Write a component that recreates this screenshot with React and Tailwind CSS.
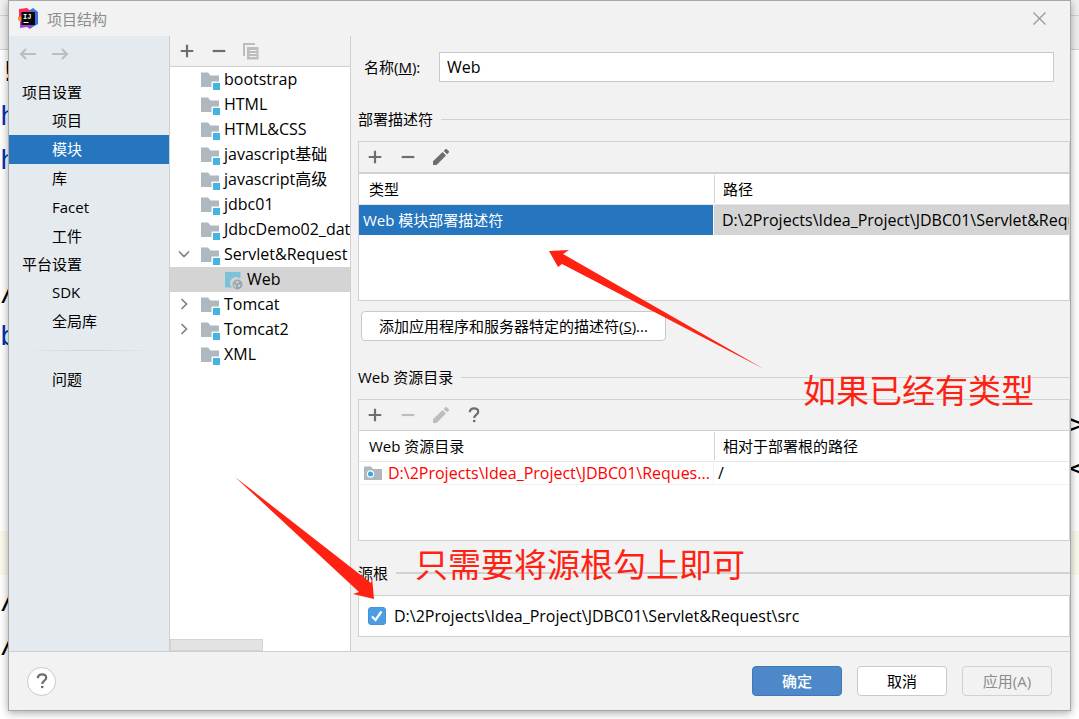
import React, { useState } from 'react';

const SETTINGS_GROUPS = [
  { title: '项目设置', items: ['项目', '模块', '库', 'Facet', '工件'] },
  { title: '平台设置', items: ['SDK', '全局库'] },
];

const MODULES = [
  { name: 'bootstrap' },
  { name: 'HTML' },
  { name: 'HTML&CSS' },
  { name: 'javascript基础' },
  { name: 'javascript高级' },
  { name: 'jdbc01' },
  { name: 'JdbcDemo02_dat' },
  { name: 'Servlet&Request', open: true, children: ['Web'] },
  { name: 'Tomcat', open: false },
  { name: 'Tomcat2', open: false },
  { name: 'XML' },
];

// one entry per 44px editor line
const EDITOR_LINES = [
  { text: '!' },
  { text: 'h', tag: true },
  { text: 'h', tag: true },
  {},
  {},
  { text: '/' },
  { text: 'b', tag: true },
  {},
  { end: '>' },
  { end: '<' },
  {},
  { current: true },
  { text: '/' },
  { text: '/' },
];

const PlusIcon = () => (
  <svg width="14" height="14" viewBox="0 0 14 14" fill="none" stroke="currentColor" strokeWidth="2.2">
    <path d="M7 .7v12.600M.7 7h12.600" />
  </svg>
);

const MinusIcon = () => (
  <svg width="14" height="14" viewBox="0 0 14 14" fill="none" stroke="currentColor" strokeWidth="2.2">
    <path d="M.7 7h12.600" />
  </svg>
);

const PencilIcon = () => (
  <svg width="18" height="18" viewBox="0 0 18 18" fill="currentColor">
    <path d="M1 13.2 10.6 4l3.4 3.4L4.6 17H1zM11.7 2.9l1.6-1.6c.5-.5 1.1-.5 1.6 0l1.8 1.8c.5.5.5 1.1 0 1.6l-1.6 1.6z" />
  </svg>
);

const HelpIcon = () => (
  <svg width="12" height="16" viewBox="0 0 12 16" fill="none" stroke="currentColor" strokeWidth="2.2">
    <path d="M1.8 5.2C1.8 2.8 3.6 1.4 6 1.4s4.2 1.4 4.2 3.5C10.2 7.4 6.2 7.8 6.2 11" />
    <path d="M5 14h2.4" />
  </svg>
);

const CopyIcon = () => (
  <svg width="16" height="17" viewBox="0 0 16 17" fill="none" stroke="currentColor" strokeWidth="2">
    <path d="M1 13V1h11" />
    <path d="M4 4h11.500v12.500H4z" fill="currentColor" stroke="none" />
    <path d="M6.500 7.500h7M6.500 10.500h7M6.500 13.500h7" stroke="#f2f2f2" strokeWidth="1" />
  </svg>
);

const ArrowIcon = ({ flip }) => (
  <svg width="17" height="12" viewBox="0 0 17 12" fill="none" stroke="#bcbdbe" strokeWidth="2">
    <path d={flip ? 'M0 6h15M10 1l5 5-5 5' : 'M17 6H2M7 1 2 6l5 5'} />
  </svg>
);

const Chevron = ({ open }) => (
  <svg width="12" height="12" viewBox="0 0 12 12" fill="none" stroke="#7f8489" strokeWidth="1.7">
    <path d={open ? 'M1 3.500 6 8.500l5-5' : 'M3.500 1 8.500 6l-5 5'} />
  </svg>
);

const FolderIcon = () => (
  <svg width="20" height="18" viewBox="0 0 20 18">
    <path d="M0 .5h7l2.500 3H18v6h-7.500V15H0z" fill="#aeb8be" />
    <path d="M12 11h7v7h-7z" fill="#43b5e0" />
  </svg>
);

const WebIcon = () => (
  <svg width="18" height="18" viewBox="0 0 18 18">
    <path d="M0 0h15.500v6.700A6 6 0 0 0 7 15.500H0z" fill="#7cc3da" />
    <circle cx="12.500" cy="12.500" r="5" fill="#9aa7b0" />
    <path d="m8.700 11.500 2.300 2v2.200l-1-.5-1.500-2.500zM12 9l2 .2-.5 1.500-2 .8-1-.8zM13 12.500l2.500.3-.8 2-1.400.4z" fill="#d4d4d4" />
  </svg>
);

const ResourceFolderIcon = () => (
  <svg width="18" height="14" viewBox="0 0 18 14">
    <path d="M0 .5h7l2 2.500h9v11H0z" fill="#aeb8be" />
    <circle cx="6.500" cy="8" r="3.700" fill="#fff" />
    <circle cx="6.500" cy="8" r="2.500" fill="#35a9dc" />
  </svg>
);

const Logo = () => (
  <svg width="21" height="21" viewBox="0 0 21 21">
    <path d="m1 1 8-1 5 4-3 9-10-4z" fill="#fb2d62" />
    <path d="m0 9 5-1v7l-5-3z" fill="#fc8d1f" />
    <path d="m12 2 3-2 5 4v12l-7 4-4-4z" fill="#3b6fe8" />
    <path d="m2 13 10 2 2 4-2 2-3-2-7 1z" fill="#a63fd0" />
    <path d="M3.500 4h13.500v13H3.500z" fill="#050505" />
    <text x="5" y="11" fontSize="7" fontWeight="700" fill="#fff" fontFamily="Liberation Mono, monospace">IJ</text>
    <path d="M5.500 14.500h5" stroke="#fff" />
  </svg>
);

const ToolButton = ({ label, disabled, children }) => (
  <button
    type="button"
    aria-label={label}
    disabled={disabled}
    className="flex h-6 w-6 items-center justify-center text-[#6e6e6e] disabled:text-[#bdbdbd]"
  >
    {children}
  </button>
);

const SectionTitle = ({ thick, children }) => (
  <div className="flex h-6 items-center gap-2">
    <h2>{children}</h2>
    <div className={thick ? 'h-[2px] flex-1 bg-[#d1d1d1]' : 'h-px flex-1 bg-[#d1d1d1]'} />
  </div>
);

const HeaderCell = ({ divided, children }) => (
  <th className="h-[31px] border-b border-[#e6e6e6] p-0 text-left font-normal">
    <div className={divided ? 'border-l border-[#d1d1d1] pl-2 leading-7' : 'pl-[10px] leading-7'}>{children}</div>
  </th>
);

const Backdrop = () => (
  <div aria-hidden="true" className="absolute inset-0 overflow-hidden bg-white font-['DejaVu_Sans_Mono',monospace] text-[27px]">
    <div className="h-4 border-b border-[#d1d1d1] bg-[#f0f0f0]" />
    <div className="h-[34px] border-b border-[#d1d1d1] bg-[#f0f0f0]" />
    <div className="-mt-[3px]">
      {EDITOR_LINES.map((line, i) => (
        <div
          key={i}
          className={line.current ? 'flex h-11 justify-between bg-[#fcfaed] pt-[3px]' : 'flex h-11 justify-between pt-[3px]'}
        >
          <span className={line.tag ? 'leading-11 text-[#0033b3]' : 'leading-11 text-black'}>{line.text}</span>
          <span className="w-[10px] leading-11 text-black">{line.end}</span>
        </div>
      ))}
    </div>
  </div>
);

const Sidebar = ({ current, onSelect }) => (
  <nav className="w-[161px] shrink-0 border-r border-[#cfcfcf] bg-[#e5eaee]">
    <div className="flex h-9 items-center gap-4 px-[10px]">
      <button type="button" aria-label="后退"><ArrowIcon /></button>
      <button type="button" aria-label="前进"><ArrowIcon flip /></button>
    </div>
    <div className="pt-[7px]">
      {SETTINGS_GROUPS.map((group) => (
        <div key={group.title}>
          <h2 className="pl-[13px] leading-[27px]">{group.title}</h2>
          {group.items.map((item) => (
            <button
              key={item}
              type="button"
              onClick={() => onSelect(item)}
              className={
                item === current
                  ? 'block w-full bg-[#2675bf] pl-[43px] text-left leading-[29px] text-white'
                  : 'block w-full pl-[43px] text-left leading-[29px]'
              }
            >
              {item}
            </button>
          ))}
        </div>
      ))}
    </div>
    <div className="mx-3 my-[14px] h-px bg-linear-to-r from-transparent via-[#cfd3d6] to-transparent" />
    <button type="button" className="block w-full pl-[43px] text-left leading-[29px]">问题</button>
  </nav>
);

const ModuleTree = () => (
  <section className="flex w-[181px] shrink-0 flex-col border-r border-[#cfcfcf] bg-white">
    <div className="flex h-[31px] items-center gap-2 border-b border-[#d1d1d1] bg-[#f2f2f2] px-[5px]">
      <ToolButton label="添加"><PlusIcon /></ToolButton>
      <ToolButton label="移除"><MinusIcon /></ToolButton>
      <ToolButton label="复制" disabled><CopyIcon /></ToolButton>
    </div>
    <ul className="flex-1 overflow-hidden text-base leading-5 whitespace-nowrap">
      {MODULES.map((module) => (
        <li key={module.name}>
          <div className="flex h-[25px] items-center pb-[2px] pl-2">
            <span className="w-[23px] shrink-0">{module.open !== undefined && <Chevron open={module.open} />}</span>
            <span className="w-[23px] shrink-0 pt-[5px]"><FolderIcon /></span>
            <span>{module.name}</span>
          </div>
          {module.children?.map((child) => (
            <div key={child} className="flex h-[25px] items-center gap-1 bg-[#d4d4d4] pb-[2px] pl-[55px]">
              <span className="pt-[5px]"><WebIcon /></span>
              <span>{child}</span>
            </div>
          ))}
        </li>
      ))}
    </ul>
    <div className="h-3 w-[93px] border border-[#d4d4d4] bg-[#e3e3e3]" />
  </section>
);

const WebFacetEditor = () => (
  <main className="min-w-0 flex-1 pb-[14px]">
    <div className="flex items-center pt-4 pr-4 pl-[13px]">
      <label htmlFor="facet-name" className="w-[75px] shrink-0">
        名称(<u>M</u>):
      </label>
      <input
        id="facet-name"
        type="text"
        defaultValue="Web"
        className="h-[30px] min-w-0 flex-1 border border-[#c9c9c9] bg-white px-[7px] text-base outline-none"
      />
    </div>

    <div className="pt-[25px] pl-[7px]">
      <SectionTitle>部署描述符</SectionTitle>
      <div className="mt-[10px] min-h-[160px] border border-[#d1d1d1] bg-white">
        <div className="flex h-8 items-center gap-[9px] border-b-2 border-[#d1d1d1] bg-[#f2f2f2] pl-1">
          <ToolButton label="添加描述符"><PlusIcon /></ToolButton>
          <ToolButton label="移除描述符"><MinusIcon /></ToolButton>
          <ToolButton label="编辑描述符"><PencilIcon /></ToolButton>
        </div>
        <table className="w-full table-fixed border-separate border-spacing-0">
          <thead>
            <tr>
              <HeaderCell>类型</HeaderCell>
              <HeaderCell divided>路径</HeaderCell>
            </tr>
          </thead>
          <tbody>
            <tr className="h-[30px]">
              <td className="border-r border-white bg-[#2675bf] px-1 py-0 text-white">Web 模块部署描述符</td>
              <td className="overflow-hidden bg-[#d4d4d4] py-0 pl-2 text-base leading-5 whitespace-nowrap">
                D:\2Projects\Idea_Project\JDBC01\Servlet&amp;Requ
              </td>
            </tr>
          </tbody>
        </table>
      </div>
      <button type="button" className="mt-[10px] ml-[3px] h-[30px] rounded border border-[#c9c9c9] bg-white px-[17px]">
        添加应用程序和服务器特定的描述符(<u>S</u>)...
      </button>
    </div>

    <div className="pt-6 pl-[7px]">
      <SectionTitle>Web 资源目录</SectionTitle>
      <div className="mt-[10px] min-h-[142px] border border-[#d1d1d1] bg-white">
        <div className="flex h-[31px] items-center gap-[9px] border-b border-[#d1d1d1] bg-[#f2f2f2] pl-1">
          <ToolButton label="添加目录"><PlusIcon /></ToolButton>
          <ToolButton label="移除目录" disabled><MinusIcon /></ToolButton>
          <ToolButton label="编辑目录" disabled><PencilIcon /></ToolButton>
          <ToolButton label="帮助"><HelpIcon /></ToolButton>
        </div>
        <table className="w-full table-fixed border-separate border-spacing-0">
          <thead>
            <tr>
              <HeaderCell>Web 资源目录</HeaderCell>
              <HeaderCell divided>相对于部署根的路径</HeaderCell>
            </tr>
          </thead>
          <tbody>
            <tr>
              <td className="border-r border-b border-[#f2f2f2] py-0 pr-0 pl-[5px] text-[#f00]">
                <div className="flex items-center gap-[6px] text-base leading-[22px]">
                  <span className="shrink-0"><ResourceFolderIcon /></span>
                  <span className="truncate">D:\2Projects\Idea_Project\JDBC01\Reques...</span>
                </div>
              </td>
              <td className="border-b border-[#f2f2f2] px-1 py-0 text-base leading-[22px]">/</td>
            </tr>
          </tbody>
        </table>
      </div>
    </div>

    <div className="pt-5 pl-[7px]">
      <SectionTitle thick>源根</SectionTitle>
      <div className="mt-[10px] flex h-[42px] items-center border border-[#d1d1d1] bg-white px-[9px]">
        <label className="flex items-center gap-2">
          <span className="relative h-[18px] w-[18px]">
            <input
              type="checkbox"
              defaultChecked
              className="peer block h-[18px] w-[18px] appearance-none rounded-[3px] border border-[#b0b0b0] bg-white checked:border-[#4491d9] checked:bg-[#4d9de3]"
            />
            <svg
              width="18"
              height="18"
              viewBox="0 0 18 18"
              fill="none"
              stroke="#fff"
              strokeWidth="2.200"
              className="pointer-events-none absolute inset-0 hidden peer-checked:block"
            >
              <path d="m4 9.500 3.500 3.500L13.500 4.500" />
            </svg>
          </span>
          <span className="text-base leading-5">D:\2Projects\Idea_Project\JDBC01\Servlet&amp;Request\src</span>
        </label>
      </div>
    </div>
  </main>
);

const Annotations = () => (
  <div className="pointer-events-none absolute inset-0 overflow-hidden text-[33px] leading-10 whitespace-nowrap text-[#ff2213]">
    <svg width="1079" height="719" viewBox="0 0 1079 719" fill="#ff2213" className="absolute top-0 left-0 max-w-none">
      <path d="m549 251 20-1-6 4 201 115L562 264l-4 3z" />
      <path d="m235 477 136 106 1-6 2 22-21-5 6-2z" />
    </svg>
    <p className="absolute top-[371px] left-[803px]">如果已经有类型</p>
    <p className="absolute top-[545px] left-[415px]">只需要将源根勾上即可</p>
  </div>
);

const App = () => {
  const [page, setPage] = useState('模块');

  return (
    <div className="relative flex min-h-screen flex-col px-2 pb-2 font-['Open_Sans','Noto_Sans_CJK_SC',sans-serif] text-[15px] leading-5 text-black">
      <Backdrop />
      <div role="dialog" aria-label="项目结构" className="relative flex flex-1 flex-col border border-[#a8a8a8] bg-[#f2f2f2] shadow-[0_2px_8px_rgba(0,0,0,0.35)]">
        <header className="flex h-[35px] items-center gap-2 pr-6 pl-[9px] text-[#8c8c8c]">
          <Logo />
          <h1 className="flex-1">项目结构</h1>
          <button type="button" aria-label="关闭">
            <svg width="13" height="13" viewBox="0 0 13 13" stroke="#999" strokeWidth="1.300">
              <path d="m.5.5 12 12M12.500.5l-12 12" />
            </svg>
          </button>
        </header>
        <div className="flex flex-1">
          <Sidebar current={page} onSelect={setPage} />
          <ModuleTree />
          <WebFacetEditor />
        </div>
        <footer className="flex h-[59px] items-center gap-[15px] border-t border-[#cfcfcf] px-[18px]">
          <button
            type="button"
            aria-label="帮助"
            className="mr-auto flex h-[29px] w-[29px] items-center justify-center rounded-full border border-[#c9c9c9] bg-white text-[#6e6e6e]"
          >
            <HelpIcon />
          </button>
          <button type="button" className="h-[30px] w-[90px] rounded border border-[#3f78b8] bg-[#4d89c9] font-medium text-white">确定</button>
          <button type="button" className="h-[30px] w-[90px] rounded border border-[#c9c9c9] bg-white">取消</button>
          <button type="button" disabled className="h-[30px] w-[90px] rounded border border-[#d1d1d1] text-[#8c8c8c]">应用(A)</button>
        </footer>
      </div>
      <Annotations />
    </div>
  );
};

export default App;
